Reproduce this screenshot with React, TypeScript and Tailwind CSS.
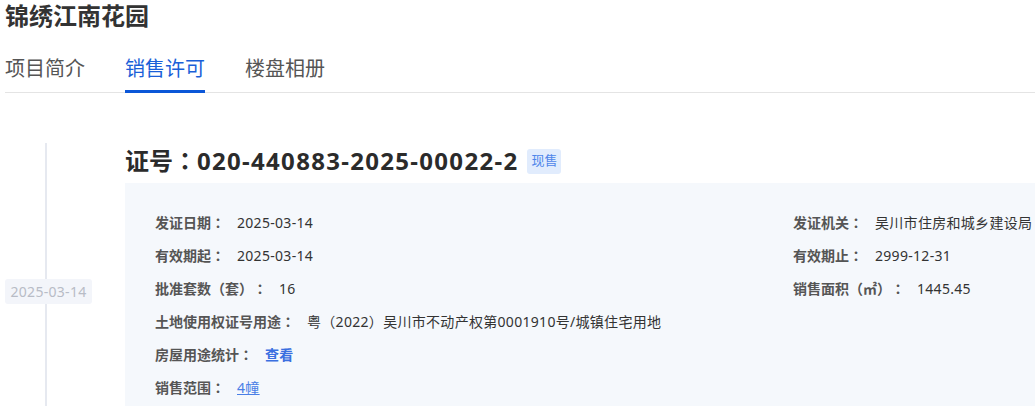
import React from "react";

const font = { fontFamily: '"Noto Sans", "Noto Sans CJK SC", sans-serif' };
const tc = { fontFamily: '"Noto Sans CJK TC", sans-serif' };

function Colon() {
  return (
    <span className="leading-none" style={tc}>
      ：
    </span>
  );
}

function Row({ label, children }: { label: string; children: React.ReactNode }) {
  return (
    <div className="flex h-[20px] items-center whitespace-nowrap">
      <span className="font-semibold leading-[20px] text-[#555]">
        {label}
        <Colon />
      </span>
      <span className="ml-3 leading-[20px] tracking-[0.3px] text-[#333]">{children}</span>
    </div>
  );
}

export default function App() {
  return (
    <div className="h-[406px] w-[1035px] overflow-hidden bg-white pl-[5px] [text-spacing-trim:space-all]" style={font}>
      <div className="text-[24px] font-bold leading-[32px] text-[#333]">锦绣江南花园</div>
      <div className="mt-[23px] flex gap-10 border-b border-[#e4e4e4]">
        <div className="-mb-px border-b-[3px] border-transparent pb-[7px] text-[20px] leading-[28px] text-[#555]">项目简介</div>
        <div className="-mb-px border-b-[3px] border-[#0b57d8] pb-[7px] text-[20px] leading-[28px] text-[#1a5fd8]">销售许可</div>
        <div className="-mb-px border-b-[3px] border-transparent pb-[7px] text-[20px] leading-[28px] text-[#555]">楼盘相册</div>
      </div>
      <div className="mt-[50px] flex">
        <div className="relative w-[120px] shrink-0">
          <div className="ml-[40px] h-[300px] w-[2px] bg-[#e6e9f0]" />
          <div className="absolute left-0 top-[136px] flex h-[25px] w-[87px] items-center justify-center rounded-[3px] bg-[#f3f5fa] text-[14px] tracking-[0.3px] text-[#b8bcc6]">
            2025-03-14
          </div>
        </div>
        <div className="w-[1300px] shrink-0">
          <div className="mb-[4px] flex h-[36px] items-center">
            <span className="whitespace-nowrap text-[24px] font-bold leading-[36px] text-[#2b2b2b]">
              证号<Colon />
              <span className="tracking-[1.3px]">020-440883-2025-00022-2</span>
            </span>
            <span className="ml-[9px] flex h-[25px] items-center rounded-[3px] bg-[#e1ecfd] px-[4px] text-[13px] text-[#4f86ea]">现售</span>
          </div>
          <div className="bg-[#f5f8fc] pb-[20px] pl-[30px] pt-[30px] text-[14px] leading-[20px]">
            <div className="grid grid-cols-[638px_1fr] gap-y-[13px]">
              <Row label="发证日期">2025-03-14</Row>
              <Row label="发证机关">吴川市住房和城乡建设局</Row>
              <Row label="有效期起">2025-03-14</Row>
              <Row label="有效期止">2999-12-31</Row>
              <Row label="批准套数（套）">16</Row>
              <Row label="销售面积（㎡）">1445.45</Row>
              <div className="col-span-2">
                <Row label="土地使用权证号用途">粤（2022）吴川市不动产权第0001910号/城镇住宅用地</Row>
              </div>
              <div className="col-span-2">
                <Row label="房屋用途统计">
                  <span className="font-semibold text-[#3a6fe0]">查看</span>
                </Row>
              </div>
              <div className="col-span-2">
                <Row label="销售范围">
                  <span className="text-[#4a7fe6] underline">4幢</span>
                </Row>
              </div>
            </div>
          </div>
        </div>
      </div>
    </div>
  );
}
